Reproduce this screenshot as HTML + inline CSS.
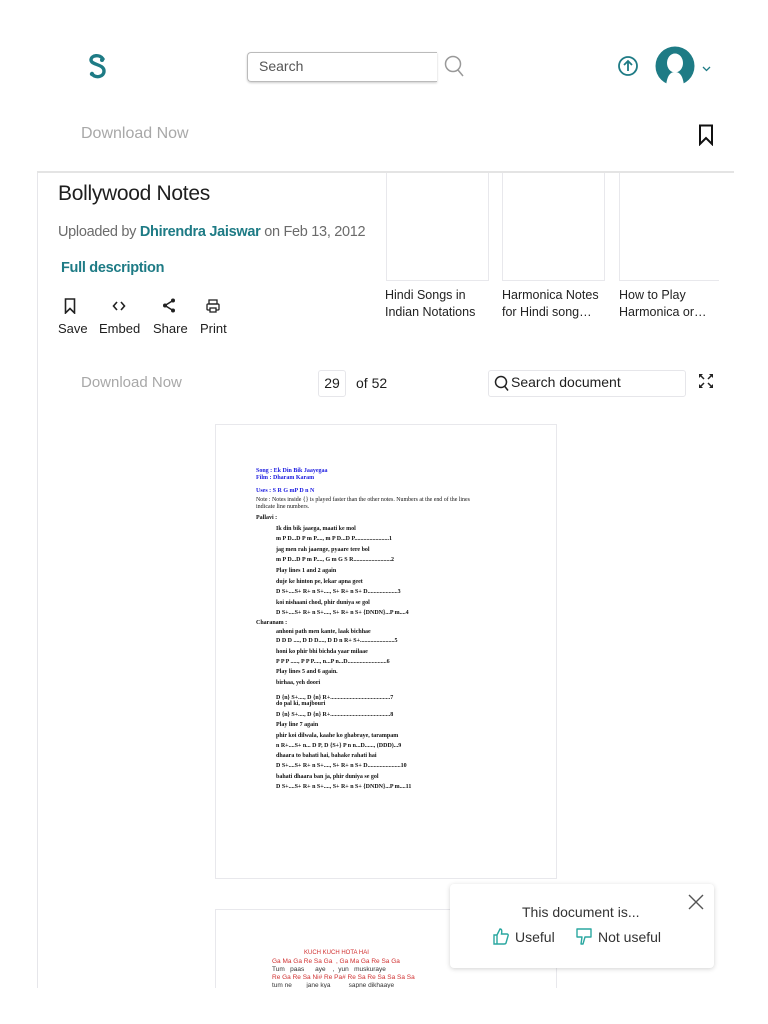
<!DOCTYPE html>
<html style="overflow:hidden;height:1024px"><head><meta charset="utf-8"><style>
*{margin:0;padding:0;box-sizing:border-box}
body{width:768px;height:1024px;overflow:hidden;background:#fff;font-family:"Liberation Sans",sans-serif;position:relative;color:#1e1e1e}
.a{position:absolute}
.t{font-family:"Liberation Sans",sans-serif;font-size:14px}
.d{position:absolute;font-family:"Liberation Serif",serif;font-size:6px;font-weight:bold;color:#111;white-space:nowrap}
.box{position:absolute;border:1px solid #e8e8ec}
</style></head><body>
<div class="a" style="left:37px;top:170px;width:1px;height:818px;background:#e6e6ea"></div>
<div class="a" style="left:0;top:0;width:768px;height:172px;background:#fff;z-index:3"></div>
<div class="a" style="left:37px;top:171px;width:697px;height:2px;background:#e4e4e4;z-index:3"></div>
<div class="a" style="left:0;top:0;width:768px;height:172px;z-index:4">
 <svg class="a" style="left:86px;top:53px" width="24" height="28" viewBox="0 0 24 28"><path d="M17 6 C14 1 5 2 5 7 C5 12 18 11 18 18 C18 24 10 25 7 22" fill="none" stroke="#1e7b85" stroke-width="3.4" stroke-linecap="round"/><circle cx="6" cy="21" r="2.2" fill="#1e7b85"/><circle cx="16" cy="7" r="2" fill="#1e7b85"/></svg>
 <div class="a" style="left:247px;top:52px;width:190px;height:30px;border:1px solid #bbb;border-right:none;border-radius:4px 0 0 4px;box-shadow:0 1px 2px rgba(0,0,0,.2)"></div>
 <div class="a t" style="left:259px;top:58px;color:#555">Search</div>
 <svg class="a" style="left:443px;top:54px" width="22" height="24" viewBox="0 0 22 24"><circle cx="10" cy="10" r="7.5" fill="none" stroke="#999" stroke-width="1.5"/><path d="M15 16 L20 22" stroke="#999" stroke-width="1.5"/></svg>
 <svg class="a" style="left:617px;top:55px" width="22" height="22" viewBox="0 0 22 22"><circle cx="11" cy="11" r="9" fill="none" stroke="#1e7b85" stroke-width="1.8"/><path d="M11 16V6M7 10l4-4 4 4" fill="none" stroke="#1e7b85" stroke-width="1.8"/></svg>
 <svg class="a" style="left:655px;top:46px" width="40" height="40" viewBox="0 0 40 40"><circle cx="20" cy="20" r="19.5" fill="#1e7b85"/><ellipse cx="20" cy="17" rx="8" ry="9.5" fill="#fff"/><path d="M11 40 C12 30 15 26 20 26 C25 26 28 30 29 40Z" fill="#fff"/></svg>
 <svg class="a" style="left:702px;top:66px" width="9" height="6" viewBox="0 0 9 6"><path d="M1 1L4.5 4.5L8 1" fill="none" stroke="#1e7b85" stroke-width="1.3"/></svg>
 <div class="a" style="left:81px;top:125px;font-size:16px;color:#a8a8a8">Download Now</div>
 <svg class="a" style="left:698px;top:124px" width="16" height="22" viewBox="0 0 16 22"><path d="M2 1.5H14V20L8 14L2 20Z" fill="none" stroke="#111" stroke-width="2"/></svg>
</div>
<div class="a" style="left:58px;top:182px;font-size:21px;color:#1e1e1e;letter-spacing:-0.3px">Bollywood Notes</div>
<div class="a" style="left:58px;top:224px;font-size:14.5px;color:#6b6b6b;letter-spacing:-0.3px">Uploaded by <span style="color:#1e7b85;font-weight:bold">Dhirendra Jaiswar</span> on Feb 13, 2012</div>
<div class="a" style="left:61px;top:260px;font-size:14.5px;color:#1e7b85;font-weight:bold;letter-spacing:-0.3px">Full description</div>
<svg class="a" style="left:64px;top:298px" width="12" height="16" viewBox="0 0 12 16"><path d="M1.5 1H10.5V15L6 10.5L1.5 15Z" fill="none" stroke="#222" stroke-width="1.6"/></svg>
<svg class="a" style="left:112px;top:300px" width="14" height="12" viewBox="0 0 14 12"><path d="M5 2L1.5 6L5 10M9 2L12.5 6L9 10" fill="none" stroke="#222" stroke-width="1.6"/></svg>
<svg class="a" style="left:162px;top:298px" width="14" height="15" viewBox="0 0 14 15"><circle cx="11" cy="2.5" r="2" fill="#222"/><circle cx="3" cy="7.5" r="2" fill="#222"/><circle cx="11" cy="12.5" r="2" fill="#222"/><path d="M11 2.5L3 7.5L11 12.5" stroke="#222" stroke-width="1.5" fill="none"/></svg>
<svg class="a" style="left:206px;top:299px" width="14" height="14" viewBox="0 0 14 14"><rect x="3" y="1" width="8" height="4" fill="none" stroke="#222" stroke-width="1.3"/><rect x="1" y="5" width="12" height="6" rx="1" fill="none" stroke="#222" stroke-width="1.3"/><rect x="4" y="9" width="6" height="4" fill="#fff" stroke="#222" stroke-width="1.3"/></svg>
<div class="a" style="left:58px;top:321px;font-size:13px">Save</div>
<div class="a" style="left:99px;top:321px;font-size:13px">Embed</div>
<div class="a" style="left:153px;top:321px;font-size:13px">Share</div>
<div class="a" style="left:200px;top:321px;font-size:13px">Print</div>
<div class="box" style="left:386px;top:165px;width:103px;height:116px"></div>
<div class="box" style="left:502px;top:165px;width:103px;height:116px"></div>
<div class="box" style="left:619px;top:165px;width:100px;height:116px;border-right:none"></div>
<div class="a" style="left:385px;top:287px;font-size:12.5px;line-height:17px;color:#222">Hindi Songs in<br>Indian Notations</div>
<div class="a" style="left:502px;top:287px;font-size:12.5px;line-height:17px;color:#222">Harmonica Notes<br>for Hindi song…</div>
<div class="a" style="left:619px;top:287px;font-size:12.5px;line-height:17px;color:#222">How to Play<br>Harmonica or…</div>
<div class="a" style="left:81px;top:374px;font-size:15px;color:#a8a8a8">Download Now</div>
<div class="a" style="left:318px;top:370px;width:28px;height:27px;border:1px solid #e6e6ea;border-radius:3px;font-size:14px;text-align:center;line-height:25px">29</div>
<div class="a" style="left:356px;top:375px;font-size:14px">of 52</div>
<div class="a" style="left:488px;top:370px;width:198px;height:27px;border:1px solid #e6e6ea;border-radius:3px"></div>
<svg class="a" style="left:494px;top:375px" width="16" height="17" viewBox="0 0 16 17"><circle cx="7" cy="7" r="5.5" fill="none" stroke="#222" stroke-width="1.5"/><path d="M10.5 11L14 15.5" stroke="#222" stroke-width="1.5"/></svg>
<div class="a" style="left:511px;top:374px;font-size:14px">Search document</div>
<svg class="a" style="left:698px;top:373px" width="16" height="16" viewBox="0 0 16 16"><path d="M1 1H5L1 5ZM15 1H11L15 5ZM1 15H5L1 11ZM15 15H11L15 11Z" fill="#222"/><path d="M2 2L6 6M14 2L10 6M2 14L6 10M14 14L10 10" stroke="#222" stroke-width="1.5"/></svg>
<div class="box" style="left:215px;top:424px;width:342px;height:455px"></div>
<div class="d" style="left:256px;top:468px;color:#1a1ae0">Song : Ek Din Bik Jaayegaa</div>
<div class="d" style="left:256px;top:475px;color:#1a1ae0">Film : Dharam Karam</div>
<div class="d" style="left:256px;top:488px;color:#1a1ae0">Uses : S R G mP D n N</div>
<div class="d" style="left:256px;top:497px;font-weight:normal;font-size:5.9px">Note : Notes inside {} is played faster than the other notes. Numbers at the end of the lines</div>
<div class="d" style="left:256px;top:504px;font-weight:normal">indicate line numbers.</div>
<div class="d" style="left:256px;top:515px">Pallavi :</div>
<div class="d" style="left:276px;top:526px">Ik din bik jaaega, maati ke mol</div>
<div class="d" style="left:276px;top:536px">m P D...D P m P...., m P D...D P.......................1</div>
<div class="d" style="left:276px;top:547px">jag men rah jaaenge, pyaare tere bol</div>
<div class="d" style="left:276px;top:557px">m P D...D P m P...., G m G S R.........................2</div>
<div class="d" style="left:276px;top:568px">Play lines 1 and 2 again</div>
<div class="d" style="left:276px;top:579px">duje ke hinton pe, lekar apna geet</div>
<div class="d" style="left:276px;top:589px">D S+....S+ R+ n S+...., S+ R+ n S+ D....................3</div>
<div class="d" style="left:276px;top:600px">koi nishaani chod, phir duniya se gol</div>
<div class="d" style="left:276px;top:610px">D S+....S+ R+ n S+...., S+ R+ n S+ {DNDN}...P m....4</div>
<div class="d" style="left:256px;top:620px">Charanam :</div>
<div class="d" style="left:276px;top:629px">anhoni path men kante, laak bichhae</div>
<div class="d" style="left:276px;top:638px">D D D ...., D D D...., D D n R+ S+.......................5</div>
<div class="d" style="left:276px;top:649px">honi ko phir bhi bichda yaar milaae</div>
<div class="d" style="left:276px;top:659px">P P P ....., P P P...., n...P n...D..........................6</div>
<div class="d" style="left:276px;top:669px">Play lines 5 and 6 again.</div>
<div class="d" style="left:276px;top:680px">birhaa, yeh doori</div>
<div class="d" style="left:276px;top:695px">D {n} S+...., D {n} R+........................................7</div>
<div class="d" style="left:276px;top:701px">do pal ki, majbouri</div>
<div class="d" style="left:276px;top:712px">D {n} S+...., D {n} R+........................................8</div>
<div class="d" style="left:276px;top:722px">Play line 7 again</div>
<div class="d" style="left:276px;top:733px">phir koi dilwala, kaahe ko ghabraye, tarampam</div>
<div class="d" style="left:276px;top:743px">n R+....S+ n... D P, D {S+} P n n...D......, (DDD)...9</div>
<div class="d" style="left:276px;top:753px">dhaara to bahati hai, bahake rahati hai</div>
<div class="d" style="left:276px;top:763px">D S+....S+ R+ n S+...., S+ R+ n S+ D......................10</div>
<div class="d" style="left:276px;top:774px">bahati dhaara ban ja, phir duniya se gol</div>
<div class="d" style="left:276px;top:784px">D S+....S+ R+ n S+...., S+ R+ n S+ {DNDN}...P m....11</div>
<div class="box" style="left:215px;top:909px;width:342px;height:80px;border-bottom:none"></div>
<div class="a" style="left:304px;top:950px;font-size:6px;color:#d03030">KUCH KUCH HOTA HAI</div>
<div class="a" style="left:272px;top:958px;font-size:6.5px;line-height:8px;color:#333;white-space:pre"><span style="color:#d03030">Ga Ma Ga Re Sa Ga  , Ga Ma Ga Re Sa Ga</span>
Tum   paas      aye    ,  yun   muskuraye
<span style="color:#d03030">Re Ga Re Sa Ni# Re Pa# Re Sa Re Sa Sa Sa Sa</span>
tum ne        jane kya          sapne dikhaaye</div>
<div class="a" style="left:0;top:988px;width:768px;height:36px;background:#fff"></div>
<div class="a" style="left:450px;top:884px;width:264px;height:84px;background:#fff;border-radius:4px;box-shadow:0 1px 5px rgba(0,0,0,.18)"></div>
<div class="a" style="left:522px;top:904px;font-size:14px;color:#333">This document is...</div>
<svg class="a" style="left:688px;top:894px" width="16" height="16" viewBox="0 0 16 16"><path d="M1 1L15 15M15 1L1 15" stroke="#555" stroke-width="1.4"/></svg>
<svg class="a" style="left:492px;top:927px" width="18" height="19" viewBox="0 0 18 19"><path d="M2 8H5V17H2ZM5 8L8 2C10 2 10 4 9.5 7H15C16 7 16.5 8 16 9L14 16C13.8 16.7 13 17 12 17H5" fill="none" stroke="#2aa7a0" stroke-width="1.4"/></svg>
<div class="a" style="left:515px;top:929px;font-size:14px;color:#333">Useful</div>
<svg class="a" style="left:575px;top:927px" width="18" height="19" viewBox="0 0 18 19"><path d="M2 2H16V10H10L8 17H6L7 10H2Z" fill="none" stroke="#2aa7a0" stroke-width="1.4" stroke-linejoin="round"/></svg>
<div class="a" style="left:598px;top:929px;font-size:14px;color:#333">Not useful</div>
</body></html>
